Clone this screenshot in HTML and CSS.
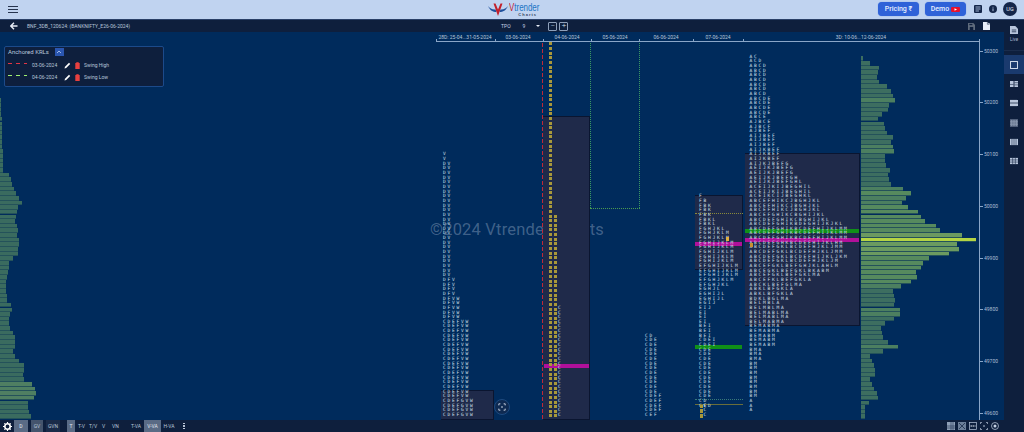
FILE: index.html
```html
<!DOCTYPE html>
<html lang="en">
<head>
<meta charset="utf-8">
<title>Vtrender Charts</title>
<link rel="stylesheet" href="styles.css">
</head>
<body>
<header class="topbar">
  <button class="burger" aria-label="Menu"><span></span><span></span><span></span></button>
  <div class="logo">
    <svg class="logo-mark" viewBox="0 0 20 13">
      <path d="M0 3C2 7.500 5 9 8.500 9L7.500 6.500C4.500 7 2 5.500 0 3Z" fill="#1d4f9c"/>
      <path d="M20 3C18 7.500 15 9 11.500 9L12.500 6.500C15.500 7 18 5.500 20 3Z" fill="#1d4f9c"/>
      <path d="M5.500 0.500L10 13L14.500 0.500L12.500 0.500L10 6.500L7.500 0.500Z" fill="#c2202c"/>
    </svg>
    <div class="logo-text">
      <div class="logo-name"><span class="logo-v">V</span>trender</div>
      <div class="logo-sub">Charts</div>
    </div>
  </div>
  <div class="top-actions">
    <button class="cta cta-pricing">Pricing ₹</button>
    <button class="cta cta-demo">Demo <svg class="yt" viewBox="0 0 9 5"><rect width="9" height="5" rx="1.200" fill="#e8112d"/><path d="M3.500 1.200L6 2.500L3.500 3.800Z" fill="#fff"/></svg></button>
    <svg class="ico-doc" viewBox="0 0 8 8"><rect width="8" height="8" rx="1" fill="#14264a"/><path d="M1.500 2H6.500M1.500 4H6.500M1.500 6H5" stroke="#c0d3f0" stroke-width=".8"/></svg>
    <svg class="ico-info" viewBox="0 0 8 8"><circle cx="4" cy="4" r="4" fill="#14264a"/><path d="M4 3.400V6.200M4 1.800V2.600" stroke="#c0d3f0" stroke-width=".9"/></svg>
    <div class="avatar">UG</div>
  </div>
</header>
<div class="workspace">
  <div class="main">
    <div class="toolbar">
      <svg class="back" viewBox="0 0 8 8"><path d="M4 .8L.8 4L4 7.200M1 4H7.500" fill="none" stroke="#e8eef8" stroke-width="1.400"/></svg>
      <span class="symbol">BNF_3DB_120624: (BANKNIFTY_E26-06-2024)</span>
      <div class="tpo">
        <span class="tpo-label">TPO</span>
        <span class="tpo-val">9</span>
        <span class="caret"></span>
        <span class="box">−</span>
        <span class="box">+</span>
      </div>
      <div class="tool-right">
        <svg class="save" viewBox="0 0 8 8"><path d="M0 0H6L8 2V8H0Z" fill="#5f6b7c"/><rect x="2" y="4.500" width="4" height="3.500" fill="#0e1f3d"/><rect x="1.500" y="1" width="3.500" height="1.500" fill="#0e1f3d"/></svg>
        <svg class="newdoc" viewBox="0 0 8 9"><path d="M0 0H5L7 2L8 1V9H0Z" fill="#e8eef8"/><path d="M5 0V2.500H7.500" fill="none" stroke="#0e1f3d" stroke-width=".6"/></svg>
      </div>
    </div>
    <div class="chart" id="chart">
      <div class="watermark">©2024 Vtrender Charts</div>
      <div class="panel">
        <div class="panel-head"><span>Anchored KRLs</span><span class="panel-btn"><svg viewBox="0 0 6 4"><path d="M1 3L3 1L5 3" fill="none" stroke="#cfe0ff" stroke-width=".7"/></svg></span></div>
        <div class="krl">
          <span class="dash dash-red"></span><span class="krl-date">03-06-2024</span>
          <svg class="pen" viewBox="0 0 7 7"><path d="M.5 6.500L1 4.800L5 .8L6.200 2L2.200 6Z" fill="#fff"/></svg>
          <svg class="bin" viewBox="0 0 5 7"><path d="M.3 1H4.700V7H.3Z" fill="#e8403f"/><rect x="1.300" width="2.400" height=".8" fill="#e8403f"/></svg>
          <span>Swing High</span>
        </div>
        <div class="krl">
          <span class="dash dash-green"></span><span class="krl-date">04-06-2024</span>
          <svg class="pen" viewBox="0 0 7 7"><path d="M.5 6.500L1 4.800L5 .8L6.200 2L2.200 6Z" fill="#fff"/></svg>
          <svg class="bin" viewBox="0 0 5 7"><path d="M.3 1H4.700V7H.3Z" fill="#e8403f"/><rect x="1.300" width="2.400" height=".8" fill="#e8403f"/></svg>
          <span>Swing Low</span>
        </div>
      </div>
      <button class="focus-btn" aria-label="Fit chart"><svg viewBox="0 0 10 10"><path d="M1 3V1H3M7 1H9V3M9 7V9H7M3 9H1V7" fill="none" stroke="#e8eef8" stroke-width="1"/><circle cx="5" cy="5" r="1" fill="#e8eef8"/></svg></button>
    </div>
    <footer class="bottombar">
      <svg class="gear" viewBox="0 0 10 10"><circle cx="5" cy="5" r="3" fill="none" stroke="#fff" stroke-width="1.800"/><path d="M5 0V2M5 8V10M0 5H2M8 5H10M1.500 1.500L3 3M7 7L8.500 8.500M8.500 1.500L7 3M3 7L1.500 8.500" stroke="#fff" stroke-width="1.300"/></svg>
      <span class="mode on w14 ml2">D</span>
      <span class="mode dim w12 ml3">GV</span>
      <span class="mode soft w14 ml3">GVN</span>
      <span class="mode on w8 ml7">T</span>
      <span class="mode w9 ml2">T-V</span>
      <span class="mode w10 ml2">T/V</span>
      <span class="mode w5 ml3">V</span>
      <span class="mode w11 ml4">VN</span>
      <span class="mode w14 ml8">T-VA</span>
      <span class="mode on w17 ml1">V-VA</span>
      <span class="mode w14 ml1">H-VA</span>
      <span class="dots ml7"><i></i><i></i><i></i></span>
      <div class="bottom-tools">
        <svg class="tool tool-on" viewBox="0 0 8 8"><path d="M0 0H8V8H0Z" fill="#8fa0b8"/><path d="M4 0V8M0 4H8M6 0V8M0 6H8" stroke="#0e1f3d" stroke-width=".5"/></svg>
        <svg class="tool tool-on" viewBox="0 0 8 8"><path d="M0 0H8V8H0Z" fill="#6d7f99"/><path d="M1 1L7 7M7 1L1 7" stroke="#0e1f3d" stroke-width=".7"/></svg>
        <svg class="tool" viewBox="0 0 8 8"><rect x=".4" y=".4" width="7.200" height="7.200" fill="none" stroke="#b8c6dc" stroke-width=".7"/><path d="M1.500 4H6.500" stroke="#e8eef8" stroke-dasharray="1.500 .5"/></svg>
        <svg class="tool" viewBox="0 0 8 8"><path d="M.4 2V.4H2M6 .4H7.600V2M7.600 6V7.600H6M2 7.600H.4V6" fill="none" stroke="#c8d4e6" stroke-width=".7"/><circle cx="4" cy="4" r=".8" fill="#c8d4e6"/></svg>
        <svg class="tool" viewBox="0 0 8 8"><circle cx="4" cy="4" r="3.500" fill="none" stroke="#c8d4e6" stroke-width=".7"/><circle cx="4" cy="4" r="1.500" fill="#c8d4e6"/></svg>
      </div>
    </footer>
  </div>
  <aside class="sidebar">
    <div class="live">
      <svg class="side-ico" viewBox="0 0 9 9"><path d="M0 0H6L9 3V9H0Z" fill="#b8c6dc"/><path d="M2 4.500H7M2 6.500H7" stroke="#0e1f3d" stroke-width=".8"/></svg>
      <span>Live</span>
    </div>
    <div class="side-item side-active"><svg class="side-ico" viewBox="0 0 9 9"><rect x=".6" y=".6" width="7.800" height="7.800" fill="none" stroke="#d5e0ee" stroke-width="1.100"/></svg></div>
    <div class="side-item"><svg class="side-ico" viewBox="0 0 9 9"><path d="M0 1H4V8H0ZM5 1H9V8H5Z" fill="#b8c6dc"/><path d="M5 3H9M0 5H4M5 5.500H9" stroke="#0e1f3d" stroke-width=".6"/></svg></div>
    <div class="side-item"><svg class="side-ico" viewBox="0 0 9 9"><path d="M0 1H9V8H0Z" fill="#b8c6dc"/><path d="M0 4.500H9" stroke="#0e1f3d" stroke-width=".8"/></svg></div>
    <div class="side-item"><svg class="side-ico" viewBox="0 0 9 9"><rect y=".5" width="9" height="8" fill="#8d9bb2"/><path d="M0 1.500H9M0 3.500H9M0 5.500H9M0 7.500H9" stroke="#0e1f3d" stroke-width=".6" stroke-dasharray="1 1"/></svg></div>
    <div class="side-item"><svg class="side-ico" viewBox="0 0 9 9"><rect y="1" width="9" height="7" fill="#b8c6dc"/><path d="M2.200 1V8M4.500 1V8M6.800 1V8" stroke="#0e1f3d" stroke-width=".6"/></svg></div>
    <div class="side-item"><svg class="side-ico" viewBox="0 0 9 9"><rect y="1" width="9" height="7" fill="#b8c6dc"/><path d="M3 1V8M6 1V8M0 3.300H9M0 5.700H9" stroke="#0e1f3d" stroke-width=".6"/></svg></div>
  </aside>
</div>
<script src="script.js"></script>
</body>
</html>
```

FILE: styles.css
```css
* { box-sizing: border-box; }
html, body { margin: 0; padding: 0; width: 1024px; height: 432px; overflow: hidden; }
body { font-family: Roboto, "Liberation Sans", sans-serif; background: #002b5c; color: #c8d4e6; display: flex; flex-direction: column; }
button { border: 0; padding: 0; font: inherit; background: none; color: inherit; }

.topbar { height: 20px; flex: none; background: #c0d3f0; border-bottom: 1px solid #2a4068; display: flex; align-items: center; position: relative; padding: 0 0 1px 8px; }
.burger { width: 10px; display: flex; flex-direction: column; gap: 2px; }
.burger span { height: 1px; background: #26344f; display: block; }
.logo { position: absolute; left: 488px; top: 2px; display: flex; gap: 1px; }
.logo-mark { width: 20px; height: 13px; margin-top: 1px; }
.logo-text { display: flex; flex-direction: column; align-items: flex-end; }
.logo-name { font: 11px/11px "Liberation Sans", sans-serif; color: #1c74c4; transform: scaleX(.72); transform-origin: left; width: 28px; white-space: nowrap; }
.logo-v { color: #c2202c; }
.logo-sub { font: bold 4px/4px "Liberation Sans", sans-serif; letter-spacing: 1px; color: #33425e; }
.top-actions { margin-left: auto; display: flex; align-items: center; }
.cta { width: 41px; height: 14px; background: #2f62d8; color: #e8f0ff; border-radius: 4px; font-size: 7px; box-shadow: 0 0 1px #5580e0; display: flex; align-items: center; justify-content: center; gap: 2px; font-weight: 500; }
.cta-demo { margin-left: 6px; }
.yt { width: 9px; height: 5px; }
.ico-doc { width: 8px; height: 8px; margin-left: 8px; }
.ico-info { width: 8px; height: 8px; margin-left: 7px; }
.avatar { width: 14px; height: 14px; border-radius: 50%; background: #14264a; color: #e8eef8; font-size: 5.500px; display: flex; align-items: center; justify-content: center; margin: 0 7px 0 6px; }

.workspace { flex: 1; display: flex; min-height: 0; }
.main { width: 1004px; display: flex; flex-direction: column; }
.toolbar { height: 12px; flex: none; background: #0e1f3d; display: flex; align-items: center; position: relative; padding-left: 10px; }
.back { width: 8px; height: 8px; }
.symbol { margin-left: 9px; font-size: 5px; color: #b8c6da; white-space: nowrap; }
.tpo { position: absolute; left: 501px; top: 1px; display: flex; align-items: center; height: 10px; font-size: 5px; }
.tpo-val { margin-left: 12px; }
.caret { margin: 0 8px 0 11px; width: 0; height: 0; border: 2px solid transparent; border-top-color: #e8eef8; border-bottom: 0; }
.box { width: 9px; height: 9px; border: 1px solid #8ea0ba; border-radius: 1px; color: #d5e0ee; font-size: 8px; font-weight: 300; line-height: 6px; text-align: center; margin-right: 2px; }
.tool-right { margin-left: auto; display: flex; gap: 8px; align-items: center; padding-right: 14px; }
.save { width: 7px; height: 7px; }
.newdoc { width: 7px; height: 8px; }

.chart { height: 388px; flex: none; position: relative; background: #002b5c; overflow: hidden; }
.watermark { position: absolute; left: 430px; top: 189px; font-size: 16.500px; line-height: 18px; letter-spacing: .2px; color: rgba(200,215,235,.32); white-space: nowrap; }
.ax { position: absolute; background: #8aa6c8; }
.date { position: absolute; top: 2px; font-size: 5px; line-height: 6px; color: #b8c6da; white-space: nowrap; transform: translateX(-50%); }
.price { position: absolute; left: 984px; font-size: 5px; line-height: 6px; color: #aebfd4; }
.rect { position: absolute; background: #1f2a4a; border: 1px solid #0a1530; border-left: 0; }
.bar { position: absolute; box-shadow: 0 1px 0 #24525a; }
.hl { position: absolute; }
.dot-v { position: absolute; width: 0; border-left: 1px dotted #3a9a62; }
.dot-h { position: absolute; height: 0; border-top: 1px dotted #4a9a50; }
.dash-v { position: absolute; width: 1px; top: 11px; bottom: 0; }
.dash-red { background: repeating-linear-gradient(to bottom, #c02838 0 4px, transparent 4px 6px); }
.row { position: absolute; font: 4.500px/4.500px "DejaVu Sans Mono", monospace; letter-spacing: 1.790px; color: #d8e2f0; white-space: pre; text-rendering: geometricPrecision; }
.y { display: inline-block; width: 3px; height: 3px; margin-top: .7px; background: #a8983a; color: transparent; margin-right: 1.500px; letter-spacing: 0; vertical-align: top; overflow: hidden; }
.panel { position: absolute; left: 4px; top: 14px; width: 160px; height: 41px; background: #0e1f3d; border: 1px solid #1c4a8a; border-radius: 2px; padding: 0 3px; font-size: 5px; color: #b8c6da; z-index: 3; }
.panel-head { display: flex; align-items: center; gap: 6px; font-size: 6px; height: 9px; margin-bottom: 3px; }
.panel-btn { width: 9px; height: 8px; background: #2a56b0; display: flex; }
.panel-btn svg { width: 6px; height: 4px; margin: auto; }
.krl { display: flex; align-items: center; height: 12px; }
.dash { width: 19px; height: 1px; margin-top: -3px; }
.dash-green { background: repeating-linear-gradient(to right, #a0f070 0 4px, transparent 4px 8px); }
.dash.dash-red { background: repeating-linear-gradient(to right, #e03545 0 4px, transparent 4px 8px); }
.krl-date { margin-left: 5px; width: 30px; }
.pen { width: 7px; height: 7px; margin-left: 2px; }
.bin { width: 5px; height: 7px; margin: 0 4px; }
.focus-btn { position: absolute; left: 494px; top: 367px; width: 16px; height: 16px; border-radius: 50%; background: #0e2a52; border: 1px solid #1d4a80; display: flex; z-index: 3; }
.focus-btn svg { width: 8px; height: 8px; margin: auto; }

.bottombar { height: 12px; flex: none; background: #0e1f3d; display: flex; align-items: stretch; font-size: 5px; color: #b8c6da; padding-left: 3px; }
.gear { width: 9px; height: 9px; align-self: center; }
.mode { display: flex; align-items: center; justify-content: center; white-space: nowrap; }
.on { background: #5a6b85; color: #e0e8f2; }
.dim { background: #44546d; }
.soft { background: #1a2b49; }
.w5 { width: 5px; } .w8 { width: 8px; } .w9 { width: 9px; } .w10 { width: 10px; } .w11 { width: 11px; } .w12 { width: 12px; } .w14 { width: 14px; } .w17 { width: 17px; }
.ml1 { margin-left: 1px; } .ml2 { margin-left: 2px; } .ml3 { margin-left: 3px; } .ml4 { margin-left: 4px; } .ml7 { margin-left: 7px; } .ml8 { margin-left: 8px; }
.dots { display: flex; flex-direction: column; justify-content: center; gap: 1px; width: 2px; }
.dots i { display: block; width: 1.500px; height: 1.500px; background: #d5e0ee; border-radius: 50%; }
.bottom-tools { margin-left: auto; display: flex; align-items: center; gap: 3px; padding-right: 5px; }
.tool { width: 8px; height: 8px; }

.sidebar { width: 20px; flex: none; background: #0e1f3d; display: flex; flex-direction: column; align-items: stretch; }
.live { height: 31px; display: flex; flex-direction: column; align-items: center; padding-top: 6px; gap: 3px; font-size: 4.500px; color: #a8b8cf; border-bottom: 1px solid #1a2c4c; margin-bottom: 4px; }
.side-item { height: 19.300px; display: flex; align-items: center; justify-content: center; }
.side-active { background: #1a3a6e; }
.side-ico { width: 8px; height: 8px; }
```

FILE: script.js
```js
(function () {
  var chart = document.getElementById('chart');
  var TOP = 32, STEP = 4.65, Y0 = 58;

  function el(cls, css, text) {
    var d = document.createElement('div');
    d.className = cls;
    for (var k in css) d.style[k] = typeof css[k] === 'number' ? css[k] + 'px' : css[k];
    if (text !== undefined) d.textContent = text;
    chart.appendChild(d);
    return d;
  }
  function expand(runs) {
    var out = [];
    runs.forEach(function (r) { for (var i = 0; i < r[0]; i++) out.push(r[1]); });
    return out;
  }
  function rows(x, start, list, cls) {
    list.forEach(function (s, i) {
      if (!s) return;
      el('row' + (cls ? ' ' + cls : ''), { left: x, top: Y0 + STEP * (start + i) - 2.25 - TOP }, s);
    });
  }

  /* left profile */
  var left = [1,1,1,1,2,2,2,2,2,2,2,3,3,3,3,3,9,11,12,14,16,19,22,18,17,16,15,17,18,17,19,19,18,18,13,9,9,8,7,6,6,6,7,7,11,12,10,9,9,10,13,15,15,15,13,15,19,24,24,23,24,32,35,36,34,28,28,29,31];
  left.forEach(function (w, i) {
    var n = i + 9;
    el('bar', { left: 0, top: 56.4 + STEP * n - TOP, width: w, height: 3.65, background: w >= 32 ? '#4f7f62' : '#3a6b5f' });
  });

  /* right profile */
  var right = [2,9,18,17,16,18,26,30,32,34,28,27,21,17,23,24,26,32,30,32,33,24,24,25,29,27,28,30,42,50,45,41,47,57,60,64,75,79,101,115,96,98,88,68,62,60,55,56,50,40,32,33,34,33,39,39,33,24,20,21,22,27,37,22,9,11,13,14,14,9,11,13,16,17,8,4,4,4];
  var lightRows = { 9: 1, 19: 1, 20: 1, 54: 1, 55: 1, 62: 1 };
  right.forEach(function (w, i) {
    var c = '#3d6e60';
    if (i === 39) c = '#b4d444';
    else if (w >= 85) c = '#6b9a60';
    else if (w >= 47) c = '#568a5e';
    else if (w >= 38 || lightRows[i]) c = '#4c7f60';
    el('bar', { left: 861, top: 56.4 + STEP * i - TOP, width: w, height: 3.65, background: c });
  });

  /* value-area rectangles */
  el('rect', { left: 441, top: 390 - TOP, width: 53, height: 30 });
  el('rect', { left: 543, top: 116 - TOP, width: 47, height: 304 });
  el('rect', { left: 695, top: 195 - TOP, width: 48, height: 75 });
  el('rect', { left: 745, top: 153 - TOP, width: 115, height: 173 });

  /* axes */
  el('ax', { left: 436, top: 41 - TOP, width: 544, height: 1 });
  el('ax', { left: 979, top: 39 - TOP, width: 1, height: 381 });
  [436, 495, 543, 591, 639, 693, 743].forEach(function (x) {
    el('ax', { left: x, top: 39 - TOP, width: 1, height: 2 });
  });
  [['28D: 25-04...31-05-2024', 465], ['03-06-2024', 518], ['04-06-2024', 567], ['05-06-2024', 615], ['06-06-2024', 666], ['07-06-2024', 718], ['3D: 10-06...12-06-2024', 861]].forEach(function (d) {
    el('date', { left: d[1] }, d[0]);
  });
  [['50300', 50.5], ['50200', 102.2], ['50100', 154], ['50000', 205.7], ['49900', 257.5], ['49800', 309.2], ['49700', 361], ['49600', 413]].forEach(function (p) {
    el('ax', { left: 980, top: p[1] - TOP, width: 3, height: 1 });
    el('price', { top: p[1] - 3 - TOP }, p[0]);
  });

  /* reference lines */
  el('dash-v dash-red', { left: 542 });
  el('dot-v', { left: 590, top: 43 - TOP, height: 165 });
  el('dot-v', { left: 639, top: 43 - TOP, height: 165 });
  el('dot-h', { left: 590, top: 208 - TOP, width: 50 });

  /* highlighted rows */
  el('hl', { left: 544, top: 364 - TOP, width: 45, height: 3.5, background: '#b0109a' });
  el('hl', { left: 695, top: 242 - TOP, width: 47, height: 4, background: '#b0109a' });
  el('hl', { left: 745, top: 238 - TOP, width: 114, height: 4, background: '#b0109a' });
  el('hl', { left: 745, top: 229 - TOP, width: 114, height: 3.5, background: '#109018' });
  el('hl', { left: 695, top: 345 - TOP, width: 47, height: 4, background: '#109018' });
  el('hl', { left: 695, top: 213 - TOP, width: 48, height: 0, borderTop: '1px dotted #8a8a3a' });
  el('hl', { left: 695, top: 399 - TOP, width: 48, height: 0, borderTop: '1px dotted #3a7a7a' });
  el('hl', { left: 695, top: 404 - TOP, width: 48, height: 1, background: '#6a6e3a' });

  /* column 1 */
  rows(443, 21, expand([[2, 'V'], [25, 'DV'], [4, 'DFV'], [5, 'DFVW'], [15, 'CDEFVW'], [2, 'CDEFVW'], [4, 'CDEFGVW']]));

  /* column 2: yellow open-range ticks */
  for (var i = -3; i <= 77; i++) {
    var html = '<span class="y">A</span>';
    if (i >= 34) html += '<span class="y">B</span>';
    if (i >= 54) html += 'C';
    var r = el('row', { left: 549, top: Y0 + STEP * i - 2.25 - TOP });
    r.innerHTML = html;
  }

  /* column 3 */
  rows(645, 60, expand([[1, 'CD'], [12, 'CDE'], [4, 'CDEF'], [1, 'CEF']]));

  /* column 4 */
  rows(699, 30, expand([[1, 'F'], [1, 'FB'], [3, 'FBK'], [2, 'FBKL'], [1, 'FGHJKL'], [2, 'FGHJKLM'], [5, 'FGHIJKLM'], [3, 'EFGHIJKLM'], [1, 'EFGHJKLM'], [1, 'EFGHJKL'], [1, 'EGHJL'], [2, 'EGHIJL'], [1, 'EGIJ'], [1, 'EIJ'], [3, 'EI'], [3, 'BEI'], [2, 'CDEI'], [11, 'CDE'], [1, 'CD'], [1, 'CE']]));
  rows(699, 75, [' CD', ' C', ' C']);
  [75, 76, 77].forEach(function (n) {
    el('hl', { left: 699.5, top: Y0 + STEP * n - 2 - TOP, width: 3, height: 3.5, background: '#a8983a' });
  });
  el('hl', { left: 726, top: 237 - TOP, width: 3, height: 4, background: '#e0b040' });

  /* column 5 */
  rows(749.5, 0, expand([
    [1, 'AC'], [1, 'ACD'], [7, 'ABCD'], [4, 'ABCDE'], [1, 'ABCE'], [1, 'AJBCE'], [1, 'AJBCF'], [1, 'AJBEF'],
    [3, 'AIJBEF'], [3, 'AIJKBEF'], [1, 'AIJKJBEFG'], [2, 'AEIJKJBEFG'], [1, 'AEIJKJBEFGH'], [1, 'AEIJKJBEFGHL'],
    [2, 'ACEIJKIJBEGHIL'], [1, 'ACEIKCIJBEGHKL'], [3, 'ABCEFHIKCJBGHJKL'], [1, 'ABCEFGHIKCBGHIJKL'],
    [1, 'ABCDEFGHIKCBGHIJKL'], [1, 'ABCDEFGHIKBDEGHIJKJKL'], [3, 'ABCDEFGHIKBCDEFHIJKLMM'],
    [1, 'ABCDEFGHKBCDEFHIJKLHM'], [2, 'ABCDEFGKLBCDEFHJKLJMM'], [1, 'ABCDEFGKLBCDEFHIJKLJKM'], [1, 'ABCDEFGKLBCDEFHJKLJM'],
    [1, 'ABCEFGKLBEFGHJKLAHLM'], [1, 'ABCEGKLBEFGKLBKABM'], [1, 'ABCEFGKLBEFGKLMA'], [1, 'ABCEFKLBEFGKLA'],
    [1, 'ABCKLBEFGLMA'], [2, 'ABKLBFGKLA'], [1, 'BDKLBGLMA'], [1, 'BELMBLA'], [1, 'BELMBLMA'], [2, 'BELMABLMA'],
    [1, 'BELMABMA'], [2, 'BEMABMA'], [3, 'BEMABM'], [3, 'BMA'], [8, 'BM'], [3, 'A']
  ]));
  el('hl', { left: 750, top: 243 - TOP, width: 3, height: 3.5, background: '#c89030' });
})();
```
